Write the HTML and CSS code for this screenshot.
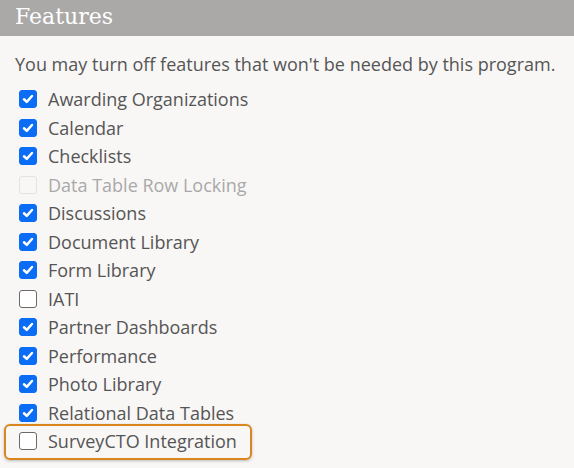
FILE: index.html
```html
<!DOCTYPE html>
<html>
<head>
<meta charset="utf-8">
<link rel="stylesheet" href="styles.css">
</head>
<body>
<div class="header">Features</div>
<div class="content">
  <p class="intro">You may turn off features that won't be needed by this program.</p>
  <ul class="list">
    <li class="item"><span class="box on"><svg viewBox="0 0 18 18"><path d="M4.5 9.3 L7.6 12.3 L13.5 5.6" /></svg></span>Awarding Organizations</li>
    <li class="item"><span class="box on"><svg viewBox="0 0 18 18"><path d="M4.5 9.3 L7.6 12.3 L13.5 5.6" /></svg></span>Calendar</li>
    <li class="item"><span class="box on"><svg viewBox="0 0 18 18"><path d="M4.5 9.3 L7.6 12.3 L13.5 5.6" /></svg></span>Checklists</li>
    <li class="item disabled"><span class="box"></span>Data Table Row Locking</li>
    <li class="item"><span class="box on"><svg viewBox="0 0 18 18"><path d="M4.5 9.3 L7.6 12.3 L13.5 5.6" /></svg></span>Discussions</li>
    <li class="item"><span class="box on"><svg viewBox="0 0 18 18"><path d="M4.5 9.3 L7.6 12.3 L13.5 5.6" /></svg></span>Document Library</li>
    <li class="item"><span class="box on"><svg viewBox="0 0 18 18"><path d="M4.5 9.3 L7.6 12.3 L13.5 5.6" /></svg></span>Form Library</li>
    <li class="item"><span class="box"></span>IATI</li>
    <li class="item"><span class="box on"><svg viewBox="0 0 18 18"><path d="M4.5 9.3 L7.6 12.3 L13.5 5.6" /></svg></span>Partner Dashboards</li>
    <li class="item"><span class="box on"><svg viewBox="0 0 18 18"><path d="M4.5 9.3 L7.6 12.3 L13.5 5.6" /></svg></span>Performance</li>
    <li class="item"><span class="box on"><svg viewBox="0 0 18 18"><path d="M4.5 9.3 L7.6 12.3 L13.5 5.6" /></svg></span>Photo Library</li>
    <li class="item"><span class="box on"><svg viewBox="0 0 18 18"><path d="M4.5 9.3 L7.6 12.3 L13.5 5.6" /></svg></span>Relational Data Tables</li>
    <li class="item highlight"><span class="box"></span>SurveyCTO Integration</li>
  </ul>
</div>
</body>
</html>
```
FILE: styles.css
```css
html, body {
  margin: 0;
  padding: 0;
  background: #f8f7f5;
  height: 100%;
  overflow: hidden;
}
body {
  font-family: "Open Sans", "Liberation Sans", sans-serif;
  color: #555555;
}
.header {
  background: #aaa9a7;
  color: #ffffff;
  font-family: "DejaVu Serif", "Liberation Serif", serif;
  font-size: 22px;
  height: 36px;
  line-height: 34px;
  padding-left: 15px;
  box-sizing: border-box;
}
.content {
  padding: 0 0 0 15px;
}
.intro {
  margin: 0;
  padding-top: 15px;
  font-size: 18px;
  line-height: 26px;
  height: 33.75px;
}
.list {
  list-style: none;
  margin: 0;
  padding: 0;
}
.item {
  display: flex;
  align-items: center;
  height: 28.5px;
  font-size: 18px;
  padding-left: 4px;
  position: relative;
}
.box {
  width: 18px;
  height: 18px;
  border-radius: 3px;
  border: 1px solid #6b6b6b;
  background: #ffffff;
  box-sizing: border-box;
  margin-right: 11px;
  flex: none;
  display: flex;
}
.box.on {
  background: #0b6cf5;
  border-color: #0b6cf5;
}
.box svg {
  width: 100%;
  height: 100%;
}
.box svg path {
  fill: none;
  stroke: #ffffff;
  stroke-width: 2.8;
  stroke-linecap: round;
  stroke-linejoin: round;
}
.disabled {
  color: #a9a9a9;
}
.disabled .box {
  border-color: #e4e3e1;
  background: #f8f7f5;
}
.highlight::before {
  content: "";
  position: absolute;
  left: -11px;
  top: -3px;
  width: 248px;
  height: 36px;
  border: 2.5px solid #d8861d;
  border-radius: 6px;
  box-sizing: border-box;
  box-shadow: 0 1px 3px rgba(0,0,0,0.25);
}
```
